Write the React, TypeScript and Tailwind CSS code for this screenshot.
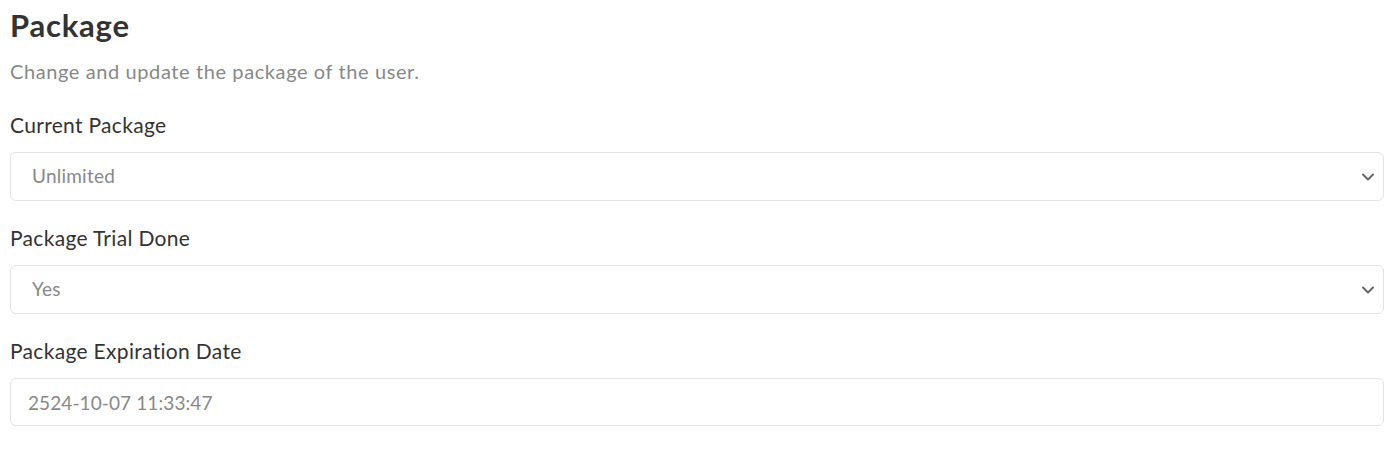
type SelectFieldProps = {
  label: string;
  value: string;
  options: string[];
};

function Chevron() {
  return (
    <svg
      viewBox="0 0 14 8"
      className="pointer-events-none absolute right-[9px] top-1/2 h-[8px] w-[14px] -translate-y-1/2"
      fill="none"
      stroke="#666"
      strokeWidth="2"
      strokeLinecap="round"
      strokeLinejoin="round"
    >
      <path d="M2 1.5 7 6.5 12 1.5" />
    </svg>
  );
}

function SelectField({ label, value, options }: SelectFieldProps) {
  return (
    <div className="mt-[22px] first:mt-[25px]">
      <label className="block text-[21px] leading-[30px] tracking-[0.015em] text-[#333]">{label}</label>
      <div className="relative mt-[12px]">
        <select
          defaultValue={value}
          className="h-[49px] w-full appearance-none rounded-[6px] border border-[#e3e3e3] bg-white pl-[21px] pr-10 text-[19px] tracking-[0.012em] text-[#888] outline-none"
        >
          {options.map((option) => (
            <option key={option}>{option}</option>
          ))}
        </select>
        <Chevron />
      </div>
    </div>
  );
}

export default function App() {
  return (
    <div className="min-h-[461px] bg-white pl-[10px] pr-[16px] pt-[7px]" style={{ fontFamily: "Lato, 'Noto Sans', sans-serif" }}>
      <h2 className="text-[31px] font-bold leading-[36px] tracking-[0.025em] text-[#333]">Package</h2>
      <p className="mt-[14px] text-[20px] leading-[28px] tracking-[0.03em] text-[#888]">Change and update the package of the user.</p>

      <div>
        <SelectField label="Current Package" value="Unlimited" options={["Free", "Basic", "Pro", "Unlimited"]} />
        <SelectField label="Package Trial Done" value="Yes" options={["Yes", "No"]} />
        <div className="mt-[22px]">
          <label className="block text-[21px] leading-[30px] tracking-[0.015em] text-[#333]">Package Expiration Date</label>
          <input
            defaultValue="2524-10-07 11:33:47"
            className="mt-[12px] h-[48px] w-full rounded-[6px] border border-[#e3e3e3] bg-white px-[17px] text-[19px] tracking-[0.005em] text-[#888] outline-none"
          />
        </div>
      </div>
    </div>
  );
}
